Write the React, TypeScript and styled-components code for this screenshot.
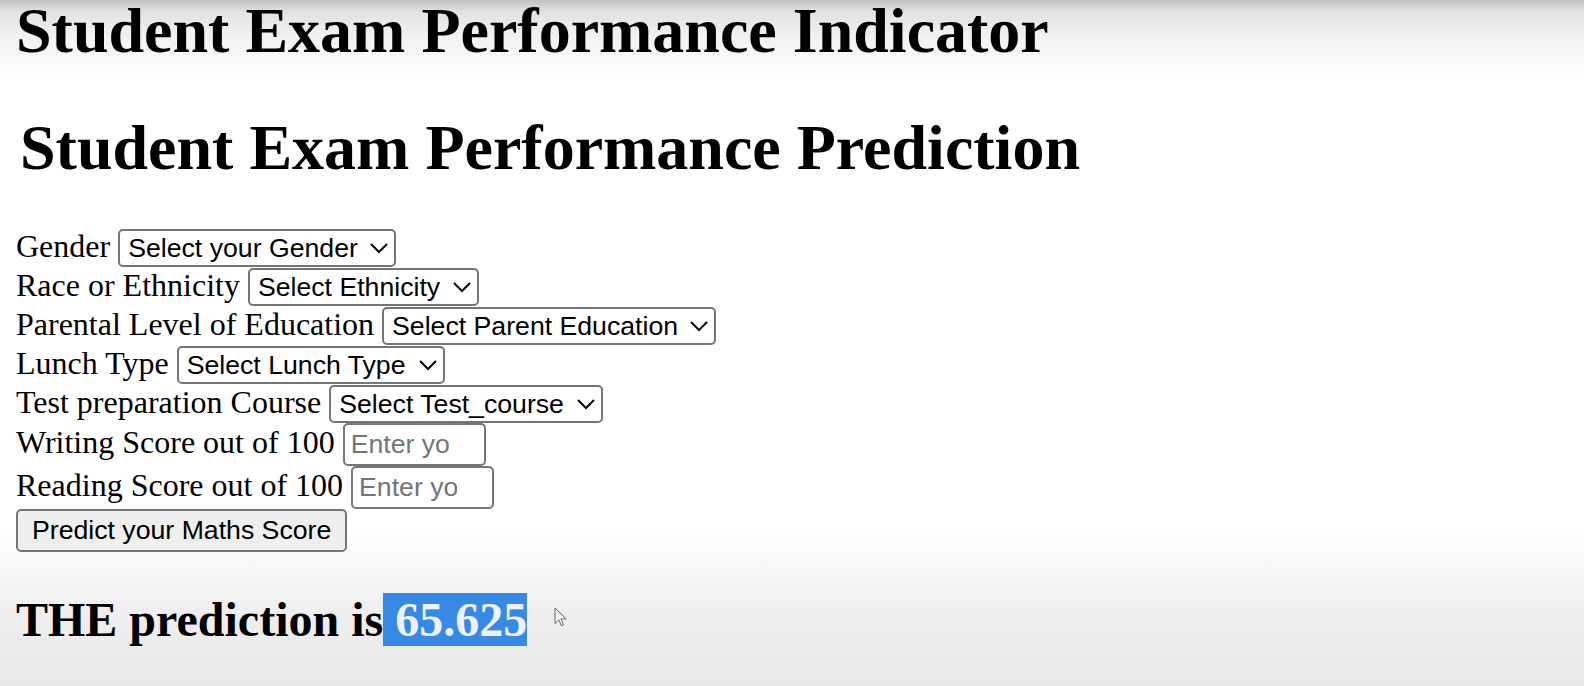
import React from "react";
import styled, { createGlobalStyle } from "styled-components";

const GlobalStyle = createGlobalStyle`
  html {
    height: 100%;
    background: linear-gradient(
      to bottom,
      #c3c3c3 0px,
      #e2e2e2 12px,
      #f1f1f1 35px,
      #fafafa 62px,
      #ffffff 82px,
      #ffffff 525px,
      #f8f8f8 565px,
      #efefef 610px,
      #e8e8e8 686px
    );
  }
  body {
    margin: 0;
    font-family: "Liberation Serif", "Times New Roman", serif;
    color: #000;
  }
`;

const Screen = styled.div`
  position: relative;
  min-height: 686px;
`;

const Page = styled.div`
  zoom: 2;
  padding: 0 8px;
`;

const Title = styled.h1<{ $lead?: boolean }>`
  font-size: 32px;
  font-weight: bold;
  margin: ${(p) => (p.$lead ? "-3px" : "21.44px")} 0 21.44px;
`;

const Legend = styled.legend`
  display: block;
  padding: 0 2px;
`;

const Form = styled.form`
  margin: 0;
`;

const Field = styled.div`
  font-size: 16px;
`;

const FieldLabel = styled.label`
  font-family: "Liberation Serif", "Times New Roman", serif;
`;

const Select = styled.select`
  font-family: "Liberation Sans", Arial, sans-serif;
  font-size: 13.333px;
  color: #000;
  background-color: #fff;
  border: 1px solid #767676;
  border-radius: 2.5px;
  padding-right: 2px;
`;

const NumberInput = styled.input`
  box-sizing: border-box;
  width: 71.5px;
  font-family: "Liberation Sans", Arial, sans-serif;
  font-size: 13.333px;
  padding: 2px 2.3px 2px 3px;
  background: #fff;
  border: 1px solid #767676;
  border-radius: 2.5px;
  &::placeholder {
    color: #757575;
  }
`;

const SubmitButton = styled.input`
  font-family: "Liberation Sans", Arial, sans-serif;
  font-size: 13.333px;
  color: #000;
`;

const Result = styled.h2`
  font-size: 24px;
  font-weight: bold;
  margin: 19.92px 0;
`;

const Highlight = styled.span`
  background: #3789e6;
  color: #eef2f8;
`;

const Cursor = styled.svg`
  position: absolute;
  left: 554px;
  top: 613px;
  width: 13px;
  height: 20px;
`;

const selects = [
  { label: "Gender", name: "gender", placeholder: "Select your Gender", options: ["male", "female"] },
  { label: "Race or Ethnicity", name: "ethnicity", placeholder: "Select Ethnicity", options: ["group A", "group B", "group C", "group D", "group E"] },
  {
    label: "Parental Level of Education",
    name: "parental_level_of_education",
    placeholder: "Select Parent Education",
    options: ["associate's degree", "bachelor's degree", "high school", "master's degree", "some college", "some high school"],
  },
  { label: "Lunch Type", name: "lunch", placeholder: "Select Lunch Type", options: ["free/reduced", "standard"] },
  { label: "Test preparation Course", name: "test_preparation_course", placeholder: "Select Test_course", options: ["none", "completed"] },
];

const scores = [
  { label: "Writing Score out of 100", name: "writing_score", placeholder: "Enter your Writing score" },
  { label: "Reading Score out of 100", name: "reading_score", placeholder: "Enter your Reading score" },
];

export default function App() {
  return (
    <Screen>
      <GlobalStyle />
      <Page>
        <Title $lead>Student Exam Performance Indicator</Title>
        <Form onSubmit={(e) => e.preventDefault()}>
          <Title>
            <Legend>Student Exam Performance Prediction</Legend>
          </Title>
          {selects.map((s) => (
            <Field key={s.name}>
              <FieldLabel>{s.label}</FieldLabel>{" "}
              <Select name={s.name} defaultValue="">
                <option value="" disabled>
                  {s.placeholder}
                </option>
                {s.options.map((o) => (
                  <option key={o} value={o}>
                    {o}
                  </option>
                ))}
              </Select>
            </Field>
          ))}
          {scores.map((s) => (
            <Field key={s.name}>
              <FieldLabel>{s.label}</FieldLabel>{" "}
              <NumberInput type="number" name={s.name} placeholder={s.placeholder} min={0} max={100} />
            </Field>
          ))}
          <Field>
            <SubmitButton type="submit" value="Predict your Maths Score" />
          </Field>
        </Form>
        <Result>
          THE prediction is<Highlight> 65.625</Highlight>
        </Result>
      </Page>
      <Cursor viewBox="0 0 13 20">
        <path d="M1 1 L1 16.5 L4.8 12.8 L7.4 18.8 L9.6 17.9 L7 11.9 L12.2 11.9 Z" fill="#f4f4f4" stroke="#666" strokeWidth="1" strokeLinejoin="round" />
      </Cursor>
    </Screen>
  );
}
